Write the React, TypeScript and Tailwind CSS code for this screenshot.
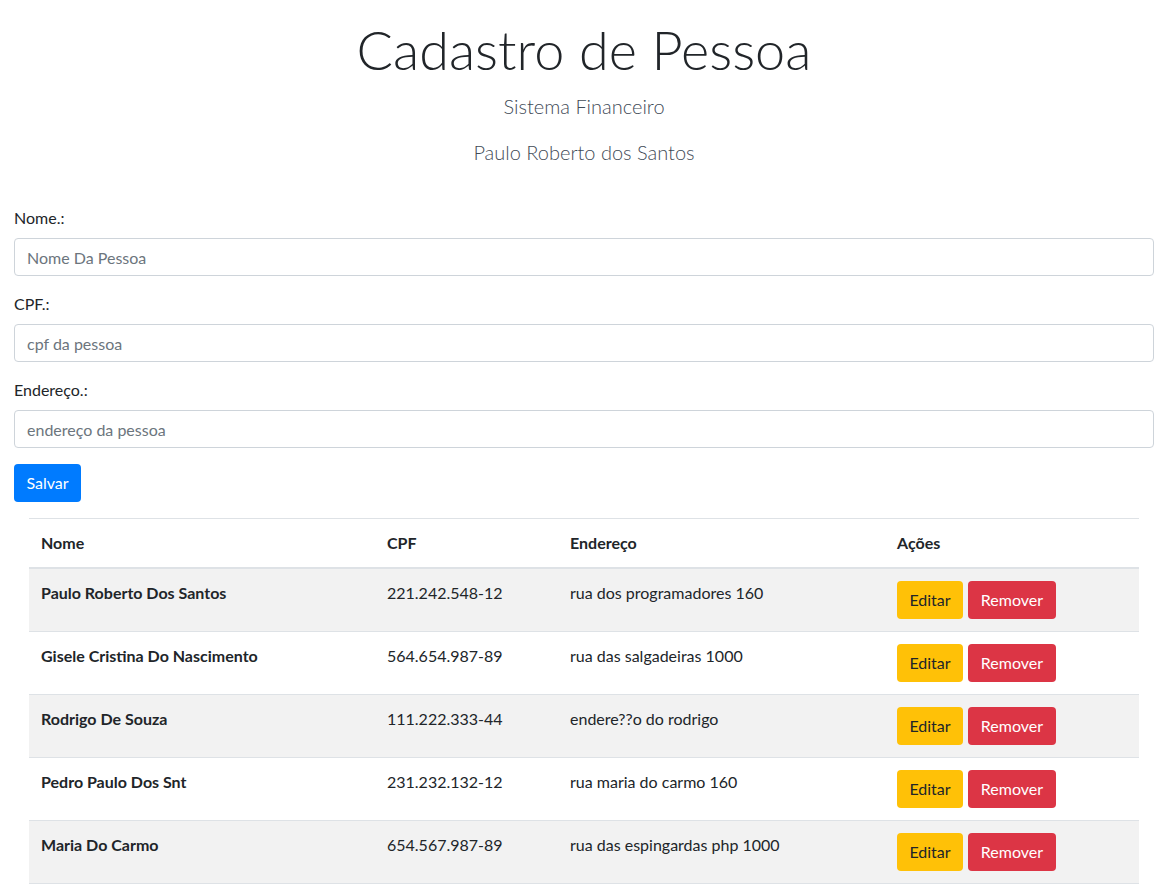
import React from "react";

const rows = [
  ["Paulo Roberto Dos Santos", "221.242.548-12", "rua dos programadores 160"],
  ["Gisele Cristina Do Nascimento", "564.654.987-89", "rua das salgadeiras 1000"],
  ["Rodrigo De Souza", "111.222.333-44", "endere??o do rodrigo"],
  ["Pedro Paulo Dos Snt", "231.232.132-12", "rua maria do carmo 160"],
  ["Maria Do Carmo", "654.567.987-89", "rua das espingardas php 1000"],
];

export default function App() {
  return (
    <div className="min-h-screen bg-white text-[#212529] text-[16px] leading-[24px] font-['Lato','Noto_Sans',sans-serif]">
      <div className="px-[14px]">
        <div className="text-center pt-[16px]">
          <h1 className="text-[54px] leading-[67px] font-light mb-[8px]">Cadastro de Pessoa</h1>
          <p className="text-[20px] leading-[30px] font-light text-[#3f4b57] mb-[16px]">Sistema Financeiro</p>
          <p className="text-[20px] leading-[30px] font-light text-[#3f4b57] mb-[16px]">Paulo Roberto dos Santos</p>
        </div>
        <form className="pt-[23px]" onSubmit={(e) => e.preventDefault()}>
          {[
            ["Nome.:", "Nome Da Pessoa"],
            ["CPF.:", "cpf da pessoa"],
            ["Endereço.:", "endereço da pessoa"],
          ].map(([label, ph]) => (
            <div key={label} className="mb-[16px]">
              <label className="block mb-[8px]">{label}</label>
              <input
                className="block w-full h-[38px] px-[12px] border border-[#ced4da] rounded-[4px] text-[#495057] placeholder:text-[#6c757d] outline-none"
                placeholder={ph}
              />
            </div>
          ))}
          <button className="h-[38px] w-[67px] bg-[#007bff] text-white rounded-[4px]">Salvar</button>
        </form>
        <div className="px-[15px] mt-[16px]">
          <table className="w-full border-collapse table-fixed">
            <colgroup>
              <col className="w-[346px]" />
              <col className="w-[183px]" />
              <col className="w-[327px]" />
              <col className="w-[254px]" />
            </colgroup>
            <thead>
              <tr className="border-t border-[#dee2e6] border-b-2">
                {["Nome", "CPF", "Endereço", "Ações"].map((h) => (
                  <th key={h} className="text-left font-bold p-[12px] align-bottom">{h}</th>
                ))}
              </tr>
            </thead>
            <tbody>
              {rows.map((r, i) => (
                <tr key={i} className={`border-t border-[#dee2e6] ${i % 2 === 0 ? "bg-[#f2f2f2]" : "bg-white"} ${i === rows.length - 1 ? "border-b" : ""}`}>
                  <td className="p-[12px] align-top font-bold">{r[0]}</td>
                  <td className="p-[12px] align-top">{r[1]}</td>
                  <td className="p-[12px] align-top">{r[2]}</td>
                  <td className="p-[12px] align-top">
                    <div className="flex gap-[5px]">
                      <button className="h-[38px] w-[66px] bg-[#ffc107] text-[#212529] rounded-[4px]">Editar</button>
                      <button className="h-[38px] w-[88px] bg-[#dc3545] text-white rounded-[4px]">Remover</button>
                    </div>
                  </td>
                </tr>
              ))}
            </tbody>
          </table>
        </div>
      </div>
    </div>
  );
}
